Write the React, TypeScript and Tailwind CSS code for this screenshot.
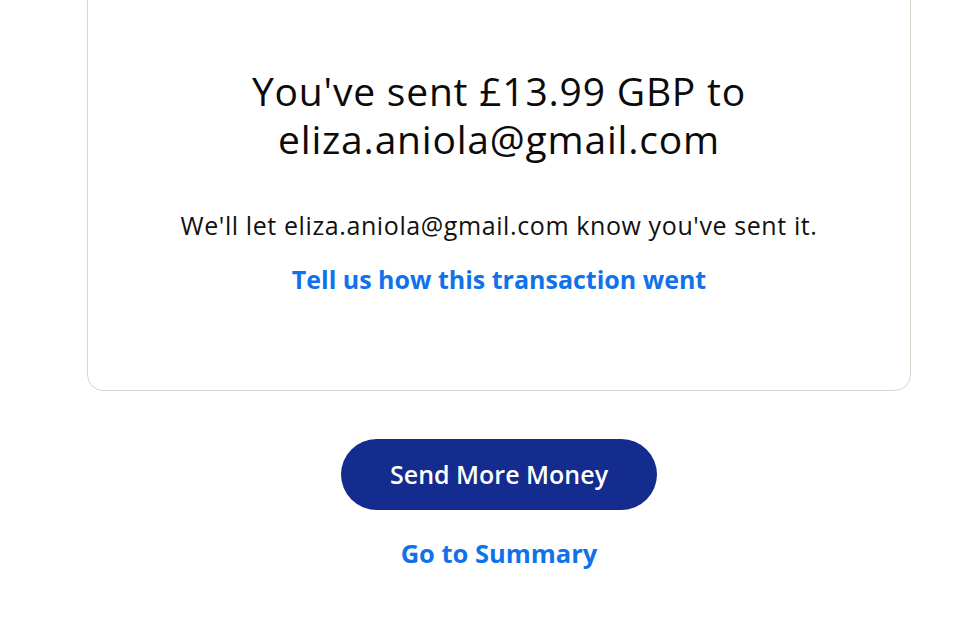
export default function App() {
  return (
    <div className="min-h-[630px] w-[959px] overflow-hidden bg-white font-['Open_Sans',sans-serif]">
      <div className="ml-[87px] w-[824px]">
        <div className="-mt-6 flex flex-col items-center rounded-2xl border border-[#d9d6cc] px-10 pt-[90px] pb-[95px] text-center">
          <h1 className="text-[39px] leading-[48px] font-normal tracking-[0.8px] text-[#0b0b0b]">
            You've sent £13.99 GBP to
            <br />
            eliza.aniola@gmail.com
          </h1>
          <p className="mt-[46px] text-[25px] leading-8 tracking-[0.6px] text-[#111]">
            We'll let eliza.aniola@gmail.com know you've sent it.
          </p>
          <a href="#" className="mt-[22px] text-[25px] leading-8 font-bold text-[#1072eb]">
            Tell us how this transaction went
          </a>
        </div>
        <div className="mt-[48px] flex flex-col items-center">
          <button className="h-[71px] w-[316px] rounded-full bg-[#142c8e] text-[25px] font-semibold text-white">
            Send More Money
          </button>
          <a href="#" className="mt-[27px] text-[25.5px] leading-8 font-bold text-[#1072eb]">
            Go to Summary
          </a>
        </div>
      </div>
    </div>
  );
}
